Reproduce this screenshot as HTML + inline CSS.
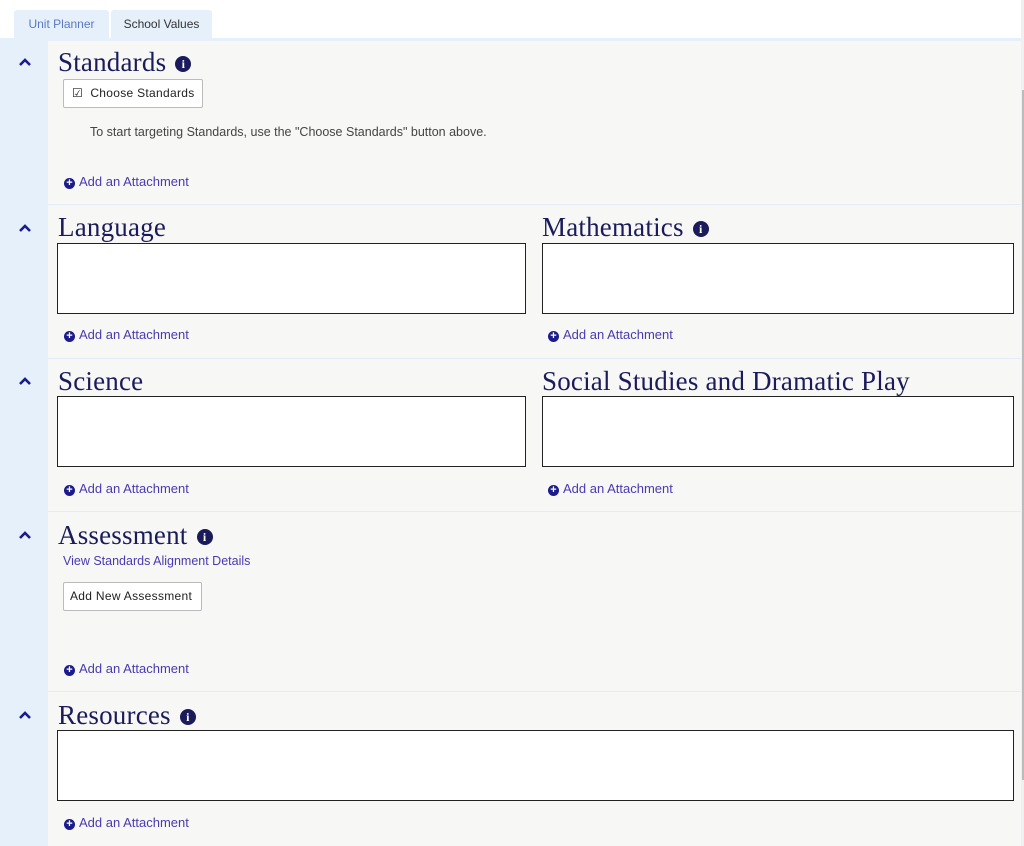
<!DOCTYPE html>
<html><head><meta charset="utf-8"><style>
*{margin:0;padding:0;box-sizing:border-box}
body{width:1024px;height:846px;background:#fff;position:relative;overflow:hidden;font-family:"Liberation Sans",sans-serif}
.a{position:absolute}
.tab{position:absolute;top:10px;height:30px;background:#e6f0fa;border-radius:3px 3px 0 0;font-size:12px;line-height:28px;text-align:center}
.h{position:absolute;font-family:"Liberation Serif",serif;font-size:27px;color:#1b1b5c;line-height:30px;letter-spacing:.2px}
.info{display:inline-block;width:16px;height:16px;border-radius:50%;background:#1b1b5c;color:#fff;font:bold 12px/16px "Liberation Serif",serif;text-align:center;vertical-align:3px;margin-left:9px;letter-spacing:0}
.box{position:absolute;background:#fff;border:1px solid #222;border-right-width:1.5px;border-bottom-width:1.5px;height:71px}
.att{position:absolute;font-size:13px;color:#4a3ab0;line-height:16px}
.att b{display:inline-block;width:11px;height:11px;border-radius:50%;background:#1b1b8c;color:#fff;font:bold 11px/11px sans-serif;text-align:center;margin-right:4px;vertical-align:0}
.chev{position:absolute;left:18px;width:14px;height:10px}
.sep{position:absolute;left:48px;width:973px;height:1px;background:#e4edf6}
.btn{position:absolute;background:#fff;border:1px solid #bbb;border-radius:2px;font-size:12px;color:#222;line-height:26px;letter-spacing:.3px}
</style></head><body>
<div class="tab" style="left:14px;width:95px;color:#5b78c4">Unit Planner</div>
<div class="tab" style="left:111px;width:101px;color:#333">School Values</div>
<div class="a" style="left:0;top:38px;width:1021px;height:3px;background:#e6f0fa"></div>
<div class="a" style="left:0;top:40px;width:48px;height:806px;background:#e6f0fa"></div>
<div class="a" style="left:48px;top:41px;width:973px;height:805px;background:#f7f7f5"></div>
<div class="a" style="left:1021px;top:0;width:3px;height:846px;background:#f0f0f0"></div>
<div class="a" style="left:1022px;top:90px;width:2px;height:690px;background:#bbb"></div>

<div class="sep" style="top:204px"></div>
<div class="sep" style="top:358px"></div>
<div class="sep" style="top:511px"></div>
<div class="sep" style="top:691px"></div>

<svg class="chev" style="top:57px" viewBox="0 0 14 10"><path d="M2 8L7 3L12 8" fill="none" stroke="#1b1b8c" stroke-width="2.6"/></svg>
<svg class="chev" style="top:223px" viewBox="0 0 14 10"><path d="M2 8L7 3L12 8" fill="none" stroke="#1b1b8c" stroke-width="2.6"/></svg>
<svg class="chev" style="top:376px" viewBox="0 0 14 10"><path d="M2 8L7 3L12 8" fill="none" stroke="#1b1b8c" stroke-width="2.6"/></svg>
<svg class="chev" style="top:530px" viewBox="0 0 14 10"><path d="M2 8L7 3L12 8" fill="none" stroke="#1b1b8c" stroke-width="2.6"/></svg>
<svg class="chev" style="top:710px" viewBox="0 0 14 10"><path d="M2 8L7 3L12 8" fill="none" stroke="#1b1b8c" stroke-width="2.6"/></svg>

<div class="h" style="left:58px;top:47px">Standards<span class="info">i</span></div>
<div class="btn" style="left:63px;top:79px;width:140px;height:29px;padding-left:8px">&#9745;&nbsp; Choose Standards</div>
<div class="a" style="left:90px;top:125px;font-size:12.5px;color:#444">To start targeting Standards, use the "Choose Standards" button above.</div>
<div class="att" style="left:64px;top:174px"><b>+</b>Add an Attachment</div>

<div class="h" style="left:58px;top:212px">Language</div>
<div class="h" style="left:542px;top:212px">Mathematics<span class="info">i</span></div>
<div class="box" style="left:57px;top:243px;width:469px"></div>
<div class="box" style="left:542px;top:243px;width:472px"></div>
<div class="att" style="left:64px;top:327px"><b>+</b>Add an Attachment</div>
<div class="att" style="left:548px;top:327px"><b>+</b>Add an Attachment</div>

<div class="h" style="left:58px;top:366px">Science</div>
<div class="h" style="left:542px;top:366px">Social Studies and Dramatic Play</div>
<div class="box" style="left:57px;top:396px;width:469px"></div>
<div class="box" style="left:542px;top:396px;width:472px"></div>
<div class="att" style="left:64px;top:481px"><b>+</b>Add an Attachment</div>
<div class="att" style="left:548px;top:481px"><b>+</b>Add an Attachment</div>

<div class="h" style="left:58px;top:520px">Assessment<span class="info">i</span></div>
<div class="a" style="left:63px;top:554px;font-size:12.5px;color:#4a3ab0">View Standards Alignment Details</div>
<div class="btn" style="left:63px;top:582px;width:139px;height:29px;padding-left:6px">Add New Assessment</div>
<div class="att" style="left:64px;top:661px"><b>+</b>Add an Attachment</div>

<div class="h" style="left:58px;top:700px">Resources<span class="info">i</span></div>
<div class="box" style="left:57px;top:730px;width:957px"></div>
<div class="att" style="left:64px;top:815px"><b>+</b>Add an Attachment</div>
</body></html>
